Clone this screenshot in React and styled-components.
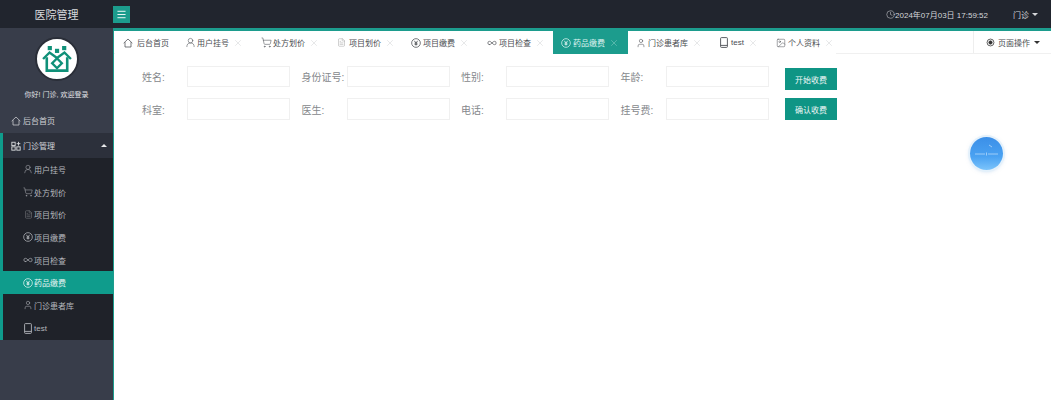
import React from "react";
import styled, {createGlobalStyle} from "styled-components";
import {Clock, FileText, Image, Infinity as InfinityIcon, Menu, ShoppingCart, User, UserRound, X} from "lucide-react";

const GlobalStyle = createGlobalStyle`
  html, body {
    margin: 0;
    height: 100%;
    background: #fff;
    overflow: hidden;
  }
  #root {
    height: 100%;
  }
  * {
    box-sizing: border-box;
  }
`;

const Page = styled.div`
  position: relative;
  width: 1051px;
  height: 400px;
  display: flex;
  flex-direction: column;
  font-family: "Liberation Sans", "Noto Sans CJK SC", sans-serif;
  font-size: 8px;
`;

const Header = styled.header`
  height: 28px;
  flex: none;
  display: flex;
  align-items: center;
  background: #21252e;
  color: #d5d7da;
`;

const Brand = styled.div`
  width: 113px;
  text-align: center;
  font-size: 11px;
  color: #d8dadd;
`;

const MenuButton = styled.div`
  width: 17px;
  height: 17px;
  display: flex;
  align-items: center;
  justify-content: center;
  background: #1c9c8d;
  color: #fff;
`;

const HeaderRight = styled.div`
  margin-left: auto;
  display: flex;
  align-items: center;
  padding-right: 13px;
`;

const ClockText = styled.span`
  display: flex;
  align-items: center;
  font-size: 8px;
  color: #d5d7da;
`;

const UserMenu = styled.span`
  display: flex;
  align-items: center;
  gap: 3px;
  margin-left: 25px;
`;

const Caret = styled.i`
  width: 0;
  height: 0;
  margin-left: ${p => p.$gap || 0}px;
  border-left: 3px solid transparent;
  border-right: 3px solid transparent;
  border-top: 3px solid ${p => p.$color || "#d5d7da"};
`;

const Body = styled.div`
  flex: 1;
  display: flex;
  min-height: 0;
`;

const Sidebar = styled.aside`
  width: 114px;
  flex: none;
  background: #383d4a;
  border-right: 1px solid #1c9c8d;
  color: #d0d2d6;
`;

const Profile = styled.div`
  height: 80px;
  display: flex;
  flex-direction: column;
  align-items: center;
  padding-top: 9px;
`;

const Avatar = styled.div`
  width: 44px;
  height: 44px;
  border-radius: 50%;
  background: #fff;
  border: 2px solid #2a2e38;
  display: flex;
  align-items: center;
  justify-content: center;
`;

const Greeting = styled.div`
  margin-top: 8px;
  font-size: 7px;
  color: #e0e2e5;
`;

const NavRow = styled.div`
  height: 25px;
  display: flex;
  align-items: center;
  gap: 2px;
  padding-left: 11px;
  padding-right: 6px;
  background: ${p => (p.$open ? "#2c303b" : "transparent")};
`;

const Group = styled.div`
  border-left: 3px solid #0f9c8c;
`;

const GroupRow = styled(NavRow)`
  padding-left: 8px;
  justify-content: flex-start;
`;

const CaretUp = styled.i`
  margin-left: auto;
  width: 0;
  height: 0;
  border-left: 3px solid transparent;
  border-right: 3px solid transparent;
  border-bottom: 3px solid #e8e9eb;
`;

const SubList = styled.div`
  background: #1f2229;
`;

const SubItem = styled.div`
  height: 22.7px;
  display: flex;
  align-items: center;
  margin-left: ${p => (p.$active ? "-3px" : "0")};
  padding-left: ${p => (p.$active ? "22px" : "19px")};
  background: ${p => (p.$active ? "#0f9c8c" : "transparent")};
  color: ${p => (p.$active ? "#e6f5f3" : "#b4b7bc")};
`;

const SubIcon = styled.span`
  width: 12px;
  flex: none;
  display: flex;
  align-items: center;
  justify-content: center;
`;

const Main = styled.main`
  flex: 1;
  min-width: 0;
  display: flex;
  flex-direction: column;
  border-top: 3px solid #1c9c8d;
`;

const TabBar = styled.div`
  height: 23px;
  flex: none;
  display: flex;
  padding-left: 1px;
  border-bottom: 1px solid #f0f0f0;
  color: #4a4d52;
`;

const Tab = styled.div`
  display: flex;
  align-items: center;
  height: 23px;
  width: ${p => p.$width}px;
  flex: none;
  padding-left: 8px;
  white-space: nowrap;
  background: ${p => (p.$active ? "#1c9c8d" : "#fff")};
  color: ${p => (p.$active ? "#dff3f0" : "#4a4d52")};
`;

const TabIcon = styled.span`
  width: ${p => p.$width || 12}px;
  flex: none;
  display: flex;
  align-items: center;
`;

const TabClose = styled(X)`
  margin-left: 4px;
  flex: none;
  color: ${p => (p.$active ? "#a8dcd5" : "#c4c6c9")};
`;

const PageAction = styled.div`
  margin-left: auto;
  width: 78px;
  display: flex;
  align-items: center;
  padding-left: 12px;
  gap: 3px;
  border-left: 1px solid #eeeeee;
`;

const Form = styled.div`
  display: flex;
  flex-direction: column;
  gap: 8px;
  padding: 12px 0 0 28px;
`;

const FormRow = styled.div`
  display: flex;
  align-items: flex-start;
`;

const Field = styled.label`
  width: 159.5px;
  flex: none;
  display: flex;
  align-items: center;
  font-size: 10px;
  color: #85888c;
`;

const FieldName = styled.span`
  width: 45px;
  flex: none;
`;

const Input = styled.input`
  width: 103px;
  height: ${p => (p.$short ? "21px" : "22px")};
  padding: 0 6px;
  background: #fff;
  border: 1px solid #f0f0f0;
  outline: none;
`;

const Button = styled.button`
  margin-left: 5px;
  margin-top: ${p => p.$top || 0}px;
  width: 52px;
  height: 22px;
  padding: 0;
  border: none;
  background: #0f9585;
  color: #f0f8f7;
  font-family: inherit;
  font-size: 8px;
`;

const Ball = styled.div`
  position: absolute;
  left: 970px;
  top: 137px;
  width: 33px;
  height: 33px;
  border-radius: 50%;
  display: flex;
  align-items: center;
  justify-content: center;
  background: linear-gradient(180deg, #3b8fe8 0%, #4aa2f2 60%, #7cc4fb 100%);
  box-shadow: 0 0 0 2px #e4f1fb, 0 1px 4px rgba(120, 170, 220, 0.5);
`;

const HouseIcon = () => (
  <svg width="10" height="10" viewBox="0 0 12 12" fill="none" stroke="currentColor" strokeWidth="0.9">
    <path d="M0.8 6.2 6 1.2l5.2 5M2.4 5v5.8h7.2V5" />
  </svg>
);

const PhoneIcon = () => (
  <svg width="8" height="11" viewBox="0 0 8 11" fill="none" stroke="currentColor" strokeWidth="0.9">
    <rect x="0.6" y="0.6" width="6.8" height="9.8" rx="0.8" />
    <path d="M0.6 8.4h6.8" />
  </svg>
);

const YenCircle = ({size = 10, color = "currentColor"}) => (
  <svg width={size} height={size} viewBox="0 0 12 12" fill="none" stroke={color}>
    <circle cx="6" cy="6" r="5.2" strokeWidth="0.9" />
    <path d="M4 3.3 6 6 8 3.3M6 6v3M4.3 6.2h3.4M4.3 7.6h3.4" strokeWidth="1" />
  </svg>
);

const GridPlus = () => (
  <svg width="10" height="10" viewBox="0 0 12 12" fill="none" stroke="#d8dadd" strokeWidth="1.1">
    <rect x="1" y="1.5" width="4" height="4" />
    <rect x="1" y="7" width="4" height="4" />
    <rect x="7" y="7" width="4" height="4" />
    <path d="M9 1v4.5M6.8 3.2h4.4" />
  </svg>
);

const HospitalLogo = () => (
  <svg width="30" height="26" viewBox="0 0 32 28">
    <g fill="#0f9078">
      <rect x="6" y="0" width="4.5" height="4.5" />
      <rect x="13.8" y="3" width="4.5" height="4.5" />
      <rect x="21.5" y="0" width="4.5" height="4.5" />
    </g>
    <path d="M1 14 8 7l8 6 8-6 7 7" fill="none" stroke="#0f9078" strokeWidth="2.6" />
    <path d="M5 12v14.5h22V12" fill="none" stroke="#0f9078" strokeWidth="2.8" />
    <path d="M16 11.5l7 7-7 7-7-7z" fill="#0f9078" />
    <path d="M16 15l3.5 3.5-3.5 3.5-3.5-3.5z" fill="#fff" />
  </svg>
);

const tabs = [
  {name: "后台首页", icon: <HouseIcon />, width: 62, plain: true, iconWidth: 14},
  {name: "用户挂号", icon: <UserRound size={11} strokeWidth={1.2} />, width: 76},
  {name: "处方划价", icon: <ShoppingCart size={11} strokeWidth={1.2} />, width: 76},
  {name: "项目划价", icon: <FileText size={9} strokeWidth={1.2} color="#999" />, width: 74},
  {name: "项目缴费", icon: <YenCircle />, width: 76},
  {name: "项目检查", icon: <InfinityIcon size={10} strokeWidth={1.6} />, width: 74},
  {name: "药品缴费", icon: <YenCircle color="#dff3f0" />, width: 75, active: true},
  {name: "门诊患者库", icon: <User size={10} strokeWidth={1.3} />, width: 84},
  {name: "test", icon: <PhoneIcon />, width: 56, iconWidth: 11},
  {name: "个人资料", icon: <Image size={10} strokeWidth={1.2} />, width: 68},
];

const subItems = [
  {name: "用户挂号", icon: <UserRound size={10} strokeWidth={1.2} />},
  {name: "处方划价", icon: <ShoppingCart size={10} strokeWidth={1.2} />},
  {name: "项目划价", icon: <FileText size={9} strokeWidth={1.2} color="#8a8d92" />},
  {name: "项目缴费", icon: <YenCircle />},
  {name: "项目检查", icon: <InfinityIcon size={10} strokeWidth={1.6} />},
  {name: "药品缴费", icon: <YenCircle color="#e6f5f3" />, active: true},
  {name: "门诊患者库", icon: <User size={10} strokeWidth={1.3} />},
  {name: "test", icon: <PhoneIcon />},
];

const formRows = [
  ["姓名:", "身份证号:", "性别:", "年龄:"],
  ["科室:", "医生:", "电话:", "挂号费:"],
];

const App = () => (
  <Page>
    <GlobalStyle />
    <Header>
      <Brand>医院管理</Brand>
      <MenuButton><Menu size={11} strokeWidth={2} /></MenuButton>
      <HeaderRight>
        <ClockText><Clock size={9} strokeWidth={1.4} />2024年07月03日 17:59:52</ClockText>
        <UserMenu>门诊 <Caret /></UserMenu>
      </HeaderRight>
    </Header>
    <Body>
      <Sidebar>
        <Profile>
          <Avatar><HospitalLogo /></Avatar>
          <Greeting>你好! 门诊, 欢迎登录</Greeting>
        </Profile>
        <NavRow><HouseIcon /> 后台首页</NavRow>
        <Group>
          <GroupRow $open><GridPlus /> 门诊管理<CaretUp /></GroupRow>
          <SubList>
            {subItems.map(item => (
              <SubItem key={item.name} $active={item.active}>
                <SubIcon>{item.icon}</SubIcon>
                {item.name}
              </SubItem>
            ))}
          </SubList>
        </Group>
      </Sidebar>
      <Main>
        <TabBar>
          {tabs.map(tab => (
            <Tab key={tab.name} $width={tab.width} $active={tab.active}>
              <TabIcon $width={tab.iconWidth}>{tab.icon}</TabIcon>
              {tab.name}
              {!tab.plain && <TabClose size={10} strokeWidth={1} $active={tab.active} />}
            </Tab>
          ))}
          <PageAction>
            <svg width="9" height="9" viewBox="0 0 12 12" fill="none" stroke="#333">
              <circle cx="6" cy="6" r="4.6" />
              <circle cx="6" cy="6" r="2.2" fill="#333" />
            </svg>
            页面操作
            <Caret $color="#333" $gap={1} />
          </PageAction>
        </TabBar>
        <Form>
          {formRows.map((row, i) => (
            <FormRow key={i}>
              {row.map(name => (
                <Field key={name}>
                  <FieldName>{name}</FieldName>
                  <Input $short={i === 0} />
                </Field>
              ))}
              <Button $top={i === 0 ? 2 : 0}>{i === 0 ? "开始收费" : "确认收费"}</Button>
            </FormRow>
          ))}
        </Form>
      </Main>
    </Body>
    <Ball>
      <svg width="27" height="27" viewBox="0 0 27 27" fill="none" stroke="#d9ecfd" strokeWidth="0.6">
        <path d="M2 14h10M15 14h10M13.5 12.5v3M16 5l3 2" />
      </svg>
    </Ball>
  </Page>
);

export default App;
